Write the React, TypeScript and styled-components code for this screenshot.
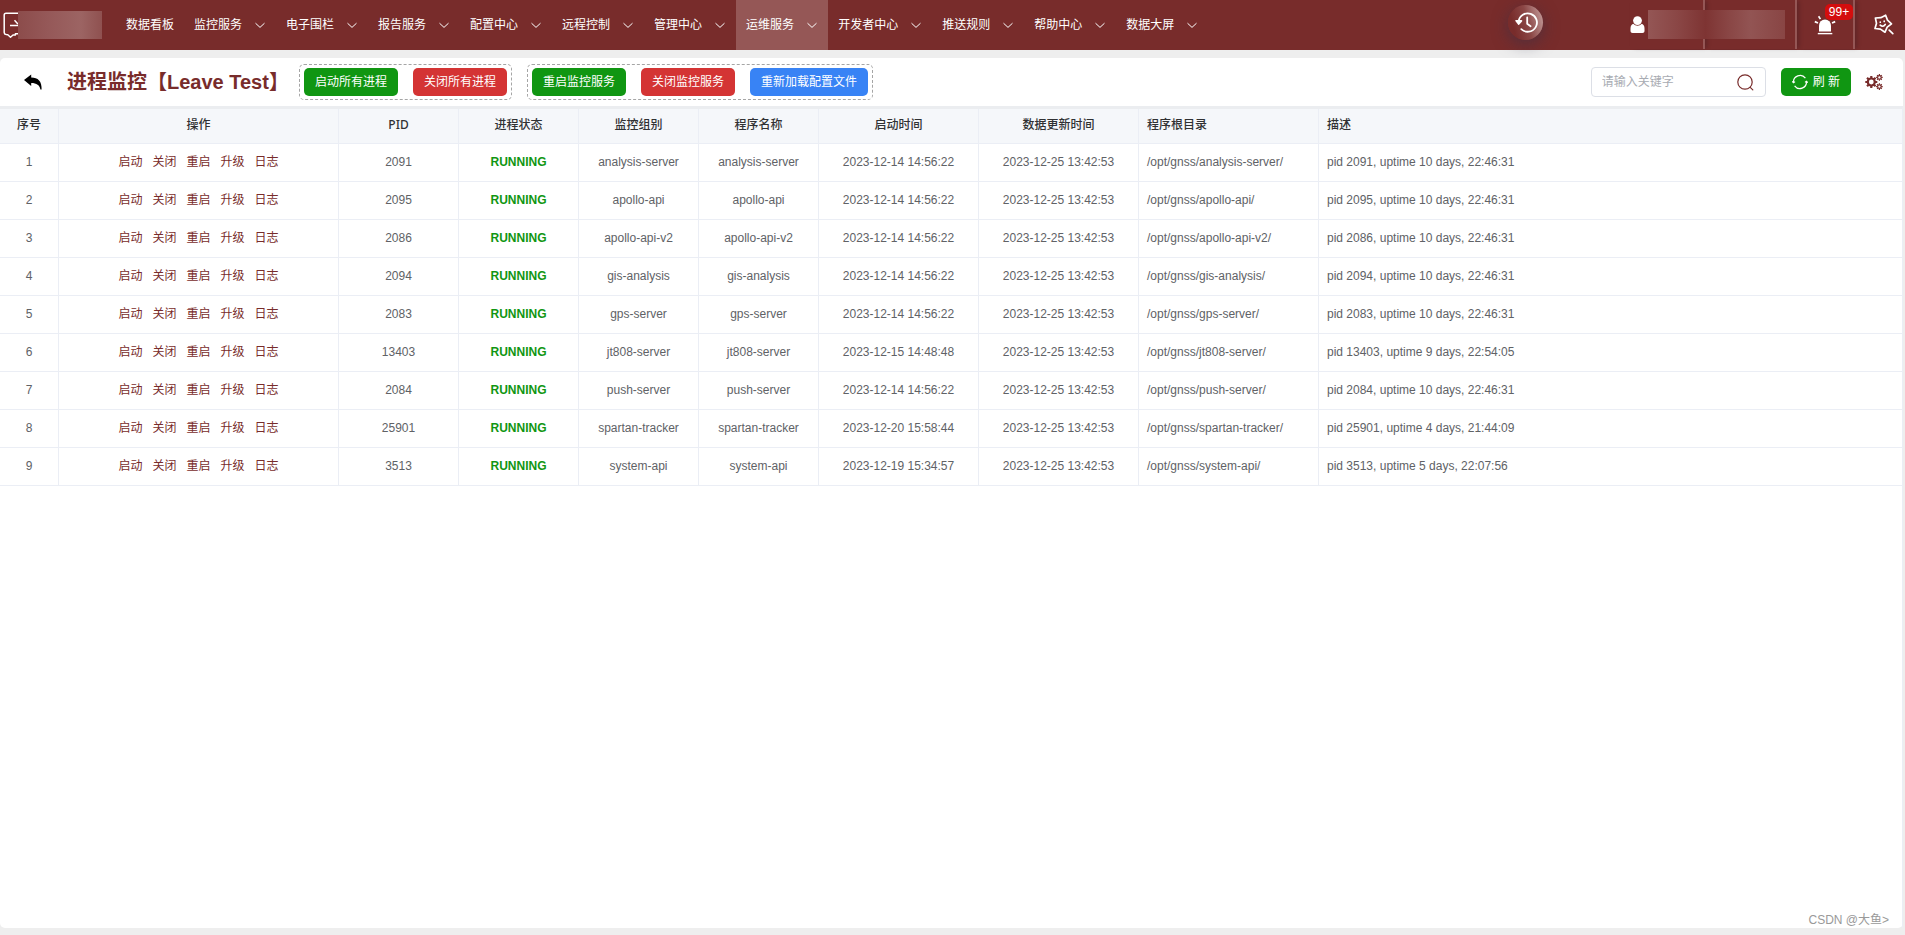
import React from 'react';
import styled, { createGlobalStyle } from 'styled-components';

const GlobalStyle = createGlobalStyle`
  *, *::before, *::after { box-sizing: border-box; }
  body {
    margin: 0;
    background: #eeeeee;
    color: #606266;
    font: 12px/18px "Liberation Sans", "Noto Sans CJK SC", sans-serif;
  }
  button, input { font: inherit; }
  svg { display: block; flex: none; }
`;

const Page = styled.div`
  display: flex;
  flex-direction: column;
  min-height: 100vh;
`;

const Header = styled.header`
  display: flex;
  height: 50px;
  background: #782c2b;
  color: #fff;
`;

const Brand = styled.a`
  display: flex;
  align-items: center;
  width: 116px;
  padding-left: 3px;
  color: #fff;
`;

const BrandName = styled.span`
  width: 84px;
  height: 28px;
  margin-left: -1px;
  background: linear-gradient(90deg, #8c4c4b, #955858 35%, #9c6463 75%, #8f5150);
`;

const Nav = styled.nav`
  display: flex;
`;

const NavItem = styled.a<{ $active?: boolean }>`
  display: flex;
  align-items: center;
  gap: 12px;
  padding: 0 10px;
  color: #fff;
  white-space: nowrap;
  text-decoration: none;
  background: ${(p) => (p.$active ? '#955756' : 'transparent')};
`;

const HeaderTools = styled.div`
  display: flex;
  margin-left: auto;
`;

const HistoryButton = styled.button`
  display: flex;
  align-items: center;
  justify-content: center;
  width: 35px;
  height: 35px;
  margin: 5px 87px 0 0;
  padding: 0;
  border: 0;
  border-radius: 50%;
  color: #fff;
  background: linear-gradient(75deg, #782c2b 20%, #8b4746 55%, #c9a5a4 100%);
  box-shadow: 0 4px 16px rgba(50, 50, 75, 0.55);
`;

const ToolCell = styled.div<{ $width: number; $last?: boolean }>`
  position: relative;
  display: flex;
  align-items: center;
  justify-content: center;
  width: ${(p) => p.$width}px;
  height: 49px;
  padding-left: ${(p) => (p.$last ? '6px' : '0')};
  border-right: ${(p) => (p.$last ? '0' : '2px solid #955756')};
  box-shadow: ${(p) => (p.$last ? 'none' : '3px 0 4px -1px rgba(40, 20, 30, 0.3)')};
`;

const UserCell = styled(ToolCell)`
  justify-content: flex-start;
`;

const AccountName = styled.span`
  position: absolute;
  z-index: 1;
  left: 18px;
  top: 10px;
  width: 137px;
  height: 29px;
  background: linear-gradient(90deg, #945655, #8a4645 22%, #7e3433 42%, #894544 58%, #925453 75%, #894544);
`;

const IconButton = styled.button`
  display: flex;
  padding: 0;
  border: 0;
  background: none;
  color: inherit;
`;

const Badge = styled.span`
  position: absolute;
  z-index: 1;
  top: 4px;
  right: 0;
  width: 28px;
  height: 16px;
  border-radius: 5px;
  background: #d40d0d;
  line-height: 16px;
  text-align: center;
`;

const Panel = styled.main`
  display: flex;
  flex: 1;
  flex-direction: column;
  margin: 8px 2px 7px 0;
  border-radius: 5px;
  background: #fff;
`;

const Toolbar = styled.div`
  display: flex;
  align-items: center;
  height: 48px;
  padding: 0 20px 0 24px;
`;

const BackButton = styled(IconButton)`
  color: #000;
`;

const Title = styled.h1`
  margin: 0 10px 0 25px;
  color: #782c2b;
  font-size: 20px;
  line-height: 28px;
  white-space: nowrap;
`;

const ButtonGroup = styled.div`
  display: flex;
  gap: 15px;
  margin-right: 15px;
  padding: 3px 4px;
  border: 1px dashed #a5a5a5;
  border-radius: 5px;
`;

const tones = { green: '#109612', red: '#d43434', blue: '#3883f5' };

const Button = styled.button<{ $tone: keyof typeof tones }>`
  display: flex;
  align-items: center;
  gap: 5px;
  height: 28px;
  padding: 0 11px;
  border: 0;
  border-radius: 5px;
  background: ${(p) => tones[p.$tone]};
  color: #fff;
  white-space: nowrap;
`;

const SearchBox = styled.label`
  display: flex;
  align-items: center;
  width: 175px;
  height: 30px;
  margin: 0 15px 0 auto;
  padding: 0 11px 0 10px;
  border: 1px solid #dcdfe6;
  border-radius: 4px;
  color: #782c2b;
`;

const SearchInput = styled.input`
  flex: 1;
  min-width: 0;
  padding: 0;
  border: 0;
  outline: 0;
  background: none;
  color: #606266;
  &::placeholder { color: #a8abb2; }
`;

const SettingsButton = styled(IconButton)`
  margin-left: 14px;
  color: #782c2b;
`;

const TableArea = styled.div`
  flex: 1;
  border-top: 3px solid #ebedf0;
  border-right: 1px solid #ebeef5;
`;

const Table = styled.table`
  width: 100%;
  table-layout: fixed;
  border-collapse: separate;
  border-spacing: 0;
`;

const Column = styled.col<{ $width?: number }>`
  width: ${(p) => (p.$width ? `${p.$width}px` : 'auto')};
`;

const cellAlign = (p: { $left?: boolean }) => (p.$left ? 'left' : 'center');

const HeadCell = styled.th<{ $left?: boolean }>`
  height: 35px;
  padding: 0 8px 2px;
  border-right: 1px solid #ebeef5;
  border-bottom: 1px solid #ebeef5;
  background: #f5f7fa;
  color: #303133;
  font-family: "Noto Sans", "Noto Sans CJK SC", sans-serif;
  font-weight: 500;
  text-align: ${cellAlign};
  white-space: nowrap;
  &:last-child { border-right: 0; }
`;

const Cell = styled.td<{ $left?: boolean }>`
  height: 38px;
  padding: 0 8px 1px;
  border-right: 1px solid #ebeef5;
  border-bottom: 1px solid #ebeef5;
  text-align: ${cellAlign};
  white-space: nowrap;
  &:last-child { border-right: 0; }
`;

const Actions = styled.div`
  display: flex;
  justify-content: center;
  gap: 10px;
`;

const ActionLink = styled.a`
  color: #782c2b;
  text-decoration: none;
`;

const Status = styled.strong`
  color: #109612;
`;

const Watermark = styled.span`
  position: absolute;
  right: 16px;
  bottom: 6px;
  color: #999;
`;

const Chevron = () => (
  <svg width="12" height="12" viewBox="0 0 12 12" fill="none" stroke="currentColor" strokeWidth="1">
    <path d="M1.5 4.2 6 8.4l4.5-4.2" />
  </svg>
);

const LogoIcon = () => (
  <svg width="16" height="28" viewBox="0 0 16 28" fill="none" stroke="currentColor" strokeWidth="1.5" strokeLinejoin="round">
    <path d="M16 2.2H3Q1.2 2.2 1.2 4v17.4q0 1.8 2 2.2l1.6.2 2.7 2.4 2.5-2.2h2.4v-1.2H16" />
    <path d="M7 14.5h9M11.5 9.3l3.4 3.6" />
  </svg>
);

const HistoryIcon = () => (
  <svg width="25" height="23" viewBox="-2 0 25 23" fill="none" stroke="currentColor" strokeWidth="1.8" strokeLinecap="round" strokeLinejoin="round">
    <path d="M3.6 10.5a9.2 9.2 0 1 1 2.7 7.6" />
    <path d="M12.2 6.5v6.2l3.4 2.6" />
    <path d="M1.2 9.8h5.2L3.7 13z" fill="currentColor" />
  </svg>
);

const UserIcon = () => (
  <svg width="15" height="18" viewBox="0 0 15 18" fill="currentColor">
    <circle cx="7.5" cy="4.6" r="4.4" />
    <path d="M3.2 7.8Q5 9.8 7.5 9.8t4.3-2Q14.5 9 14.5 12.5v2.7q0 1.8-2 1.8h-10q-2 0-2-1.8v-2.7Q.5 9 3.2 7.8z" />
  </svg>
);

const AlarmIcon = () => (
  <svg width="22" height="20" viewBox="0 0 22 20" fill="currentColor" stroke="currentColor">
    <path d="M5 16.6v-6.2a6 6 0 0 1 12 0v6.2z" stroke="none" />
    <path d="M3.8 18.6h14.5" strokeWidth="1.4" />
    <path d="M.8 6.6 4 8M4.6 1.2l1.8 2.9M21.2 6.6 18 8M17.4 1.2l-1.8 2.9" strokeWidth="1.7" fill="none" />
  </svg>
);

const StarWandIcon = () => (
  <svg width="21" height="21" viewBox="0 0 21 21" fill="none" stroke="currentColor" strokeWidth="1.7" strokeLinecap="round" strokeLinejoin="round">
    <path d="m12.6 1.2 1.9 4.9 4 3.7-4.3 3.4-2.2 5-4.6-3.1-5.4-.6 1.5-5.2L2.4 4l5.4-.3z" />
    <path d="M7.2 11.2q2.8 2.4 5-.8M7.3 8v.2M11.2 7.2v.2M16.2 16.2l3.6 3.4" />
  </svg>
);

const BackIcon = () => (
  <svg width="18" height="16" viewBox="0 0 18 16" fill="currentColor">
    <path d="M0 6 7.2.4v3.1C14 3.5 18 7.2 17.6 15.6h-1.2C15.8 11.2 12.6 9 7.2 9v3z" />
  </svg>
);

const SearchIcon = () => (
  <svg width="17" height="17" viewBox="0 0 17 17" fill="none" stroke="currentColor" strokeWidth="1.2" strokeLinecap="round">
    <circle cx="8" cy="8" r="7.2" />
    <path d="m13.2 13.4 2.6 2.5" />
  </svg>
);

const RefreshIcon = () => (
  <svg width="16" height="16" viewBox="0 0 16 16" fill="none" stroke="currentColor" strokeWidth="1.2">
    <path d="M1.5 8.6A6.6 6.6 0 0 1 13.4 4.2M14.5 7.4A6.6 6.6 0 0 1 2.6 11.8" />
    <path d="m.2 7.4 1.4 1.4 1.4-1.2M15.8 8.6l-1.4-1.4L13 8.4" />
  </svg>
);

const Gear = ({ cx, cy, r, width, tooth }: { cx: number; cy: number; r: number; width: number; tooth: number }) => (
  <g transform={`translate(${cx} ${cy})`}>
    <circle r={r} strokeWidth={width} />
    {[0, 45, 90, 135].map((angle) => (
      <path
        key={angle}
        transform={`rotate(${angle})`}
        d={`M${r} 0h${tooth}M${-r} 0h${-tooth}`}
        strokeWidth={width}
      />
    ))}
  </g>
);

const GearsIcon = () => (
  <svg width="18" height="18" viewBox="0 0 18 18" fill="none" stroke="currentColor">
    <Gear cx={6.3} cy={9} r={3.5} width={2.2} tooth={2.5} />
    <Gear cx={14.4} cy={4.4} r={1.8} width={1.2} tooth={1.5} />
    <Gear cx={14.4} cy={13.6} r={1.8} width={1.2} tooth={1.5} />
  </svg>
);

const menu = [
  '数据看板', '监控服务', '电子围栏', '报告服务', '配置中心', '远程控制',
  '管理中心', '运维服务', '开发者中心', '推送规则', '帮助中心', '数据大屏',
];

const columns: { title: string; width?: number; left?: boolean }[] = [
  { title: '序号', width: 59 },
  { title: '操作', width: 280 },
  { title: 'PID', width: 120 },
  { title: '进程状态', width: 120 },
  { title: '监控组别', width: 120 },
  { title: '程序名称', width: 120 },
  { title: '启动时间', width: 160 },
  { title: '数据更新时间', width: 160 },
  { title: '程序根目录', width: 180, left: true },
  { title: '描述', left: true },
];

const actions = ['启动', '关闭', '重启', '升级', '日志'];

const processes = [
  { pid: 2091, name: 'analysis-server', started: '2023-12-14 14:56:22', uptime: '10 days, 22:46:31' },
  { pid: 2095, name: 'apollo-api', started: '2023-12-14 14:56:22', uptime: '10 days, 22:46:31' },
  { pid: 2086, name: 'apollo-api-v2', started: '2023-12-14 14:56:22', uptime: '10 days, 22:46:31' },
  { pid: 2094, name: 'gis-analysis', started: '2023-12-14 14:56:22', uptime: '10 days, 22:46:31' },
  { pid: 2083, name: 'gps-server', started: '2023-12-14 14:56:22', uptime: '10 days, 22:46:31' },
  { pid: 13403, name: 'jt808-server', started: '2023-12-15 14:48:48', uptime: '9 days, 22:54:05' },
  { pid: 2084, name: 'push-server', started: '2023-12-14 14:56:22', uptime: '10 days, 22:46:31' },
  { pid: 25901, name: 'spartan-tracker', started: '2023-12-20 15:58:44', uptime: '4 days, 21:44:09' },
  { pid: 3513, name: 'system-api', started: '2023-12-19 15:34:57', uptime: '5 days, 22:07:56' },
];

export default function App() {
  return (
    <Page>
      <GlobalStyle />
      <Header>
        <Brand href="#" aria-label="首页">
          <LogoIcon />
          <BrandName />
        </Brand>
        <Nav>
          {menu.map((label, i) => (
            <NavItem key={label} href="#" $active={label === '运维服务'}>
              {label}
              {i > 0 && <Chevron />}
            </NavItem>
          ))}
        </Nav>
        <HeaderTools>
          <HistoryButton aria-label="历史"><HistoryIcon /></HistoryButton>
          <UserCell $width={75}>
            <UserIcon />
            <AccountName />
          </UserCell>
          <ToolCell $width={92} />
          <ToolCell $width={58}>
            <IconButton aria-label="告警"><AlarmIcon /></IconButton>
            <Badge>99+</Badge>
          </ToolCell>
          <ToolCell $width={50} $last>
            <IconButton aria-label="主题"><StarWandIcon /></IconButton>
          </ToolCell>
        </HeaderTools>
      </Header>
      <Panel>
        <Toolbar>
          <BackButton aria-label="返回"><BackIcon /></BackButton>
          <Title>进程监控【Leave Test】</Title>
          <ButtonGroup>
            <Button $tone="green">启动所有进程</Button>
            <Button $tone="red">关闭所有进程</Button>
          </ButtonGroup>
          <ButtonGroup>
            <Button $tone="green">重启监控服务</Button>
            <Button $tone="red">关闭监控服务</Button>
            <Button $tone="blue">重新加载配置文件</Button>
          </ButtonGroup>
          <SearchBox>
            <SearchInput type="text" placeholder="请输入关键字" aria-label="请输入关键字" />
            <SearchIcon />
          </SearchBox>
          <Button $tone="green"><RefreshIcon />刷 新</Button>
          <SettingsButton aria-label="设置"><GearsIcon /></SettingsButton>
        </Toolbar>
        <TableArea>
          <Table>
            <colgroup>
              {columns.map((c) => <Column key={c.title} $width={c.width} />)}
            </colgroup>
            <thead>
              <tr>
                {columns.map((c) => <HeadCell key={c.title} $left={c.left}>{c.title}</HeadCell>)}
              </tr>
            </thead>
            <tbody>
              {processes.map((p, i) => (
                <tr key={p.pid}>
                  <Cell>{i + 1}</Cell>
                  <Cell>
                    <Actions>
                      {actions.map((a) => <ActionLink key={a} href="#">{a}</ActionLink>)}
                    </Actions>
                  </Cell>
                  <Cell>{p.pid}</Cell>
                  <Cell><Status>RUNNING</Status></Cell>
                  <Cell>{p.name}</Cell>
                  <Cell>{p.name}</Cell>
                  <Cell>{p.started}</Cell>
                  <Cell>2023-12-25 13:42:53</Cell>
                  <Cell $left>{`/opt/gnss/${p.name}/`}</Cell>
                  <Cell $left>{`pid ${p.pid}, uptime ${p.uptime}`}</Cell>
                </tr>
              ))}
            </tbody>
          </Table>
        </TableArea>
      </Panel>
      <Watermark>CSDN @大鱼&gt;</Watermark>
    </Page>
  );
}
